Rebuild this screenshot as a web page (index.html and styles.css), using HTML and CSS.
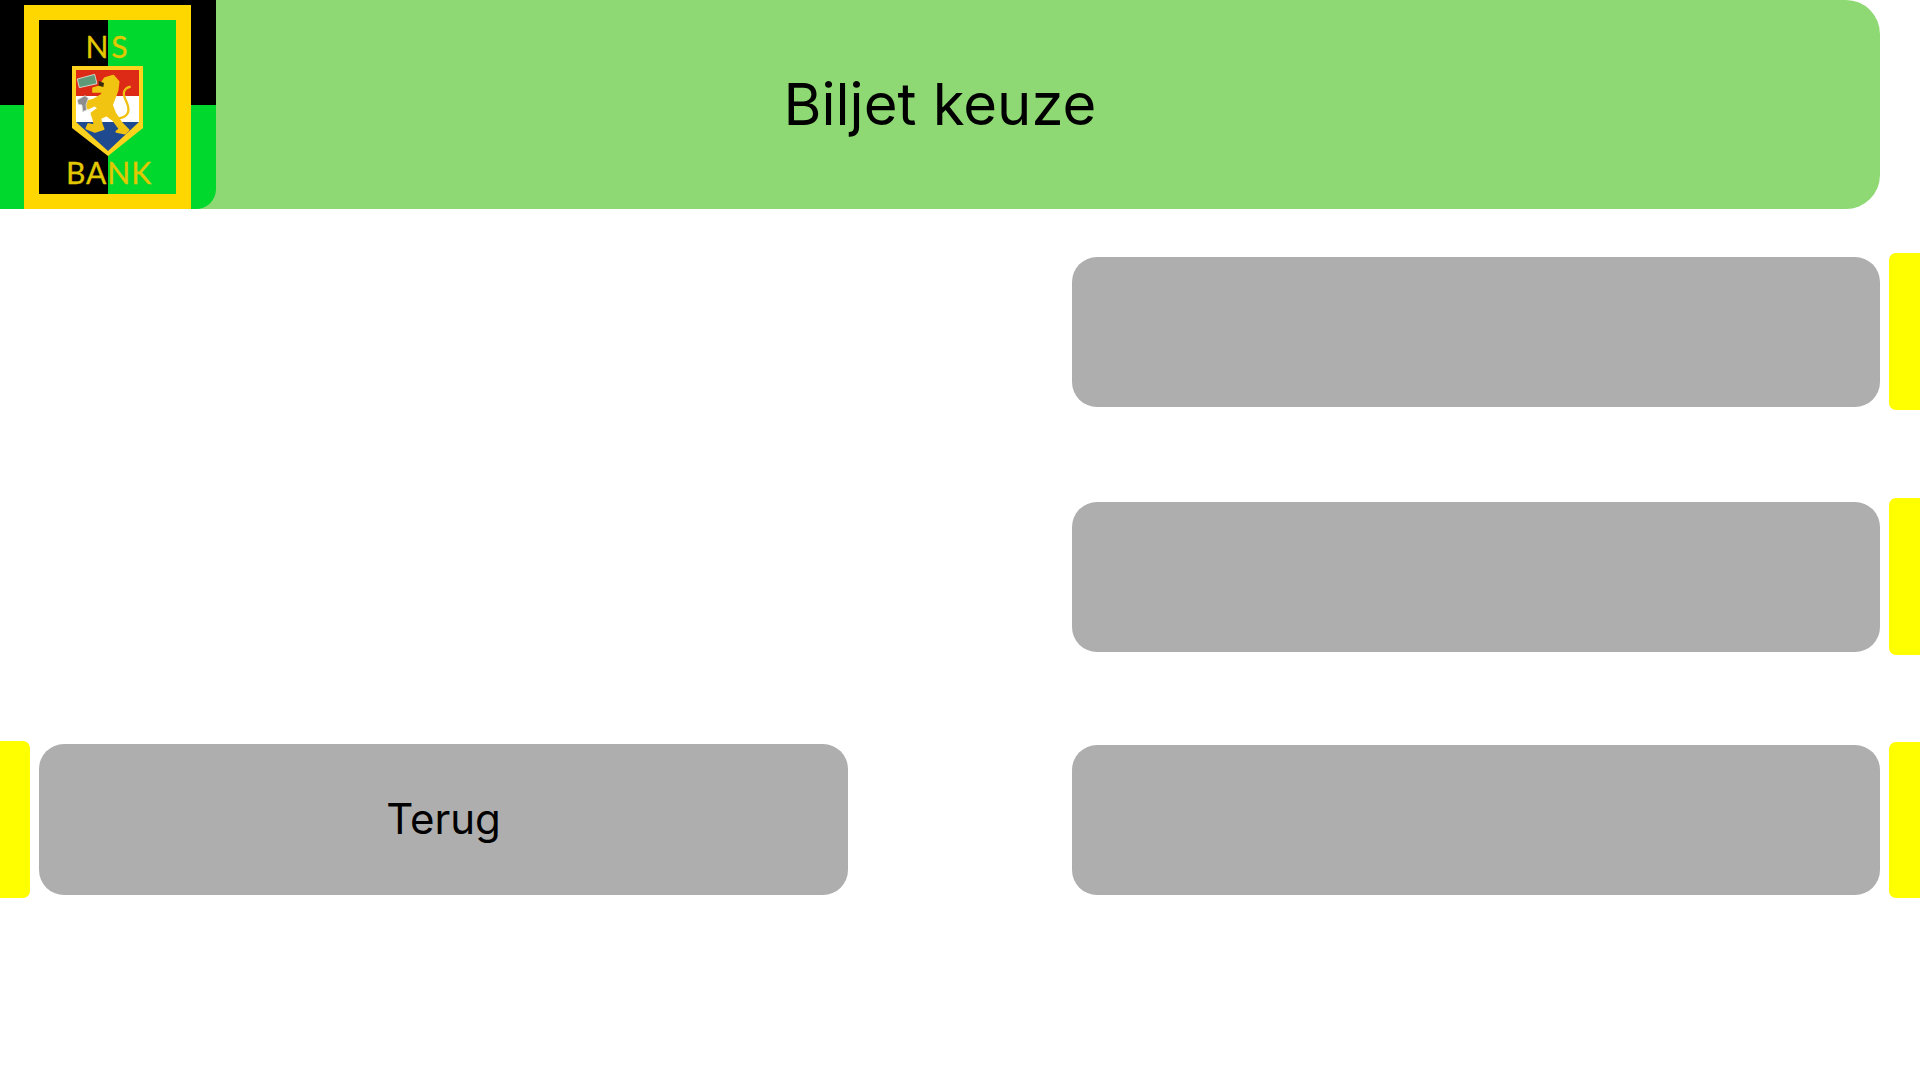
FILE: index.html
```html
<!DOCTYPE html>
<html lang="nl">
<head>
<meta charset="utf-8">
<title>Biljet keuze</title>
<link rel="stylesheet" href="styles.css">
</head>
<body>
<header class="header">
  <div class="logo">
    <svg class="logo-svg" viewBox="0 0 216 209" width="216" height="209" aria-label="NS Bank">
      <rect x="0" y="0" width="216" height="105" fill="#000"/>
      <rect x="0" y="105" width="216" height="104" fill="#00d82e"/>
      <rect x="24" y="5" width="167" height="204" fill="#ffd700"/>
      <rect x="39" y="20" width="69" height="174" fill="#000"/>
      <rect x="108" y="20" width="68" height="174" fill="#00d82e"/>
      <text class="logo-text logo-ns" x="108" y="58" text-anchor="middle">NS</text>
      <text class="logo-text" x="109" y="184" text-anchor="middle">BANK</text>
      <polygon points="72,66 143,66 143,128 108,156 72,128" fill="#ffd21e"/>
      <rect x="76" y="70" width="63" height="26" fill="#dc2a16"/>
      <rect x="76" y="96" width="63" height="26" fill="#fff"/>
      <polygon points="76,122 139,122 108,151" fill="#1f4a90"/>
      <g transform="translate(60 55) scale(0.3333)">
        <path d="M175 190 C208 185 212 165 197 135 C187 115 190 100 212 95" fill="none" stroke="#f0c010" stroke-width="7"/>
        <path d="M135 70 L160 63 L175 80 L172 105 L165 125 L155 150 L165 175 L185 205 L205 225 L195 235 L170 230 L180 222 L160 195 L140 180 L120 190 L125 210 L130 222 L105 230 L80 220 L85 208 L105 212 L100 190 L95 175 L115 160 L105 150 L85 160 L70 150 L80 140 L100 135 L125 120 L130 110 L100 110 L100 100 L120 95 L125 85 Z" fill="#f2c412" stroke="#f2c412" stroke-width="7" stroke-linejoin="round"/>
        <path d="M116 78 L132 84 L130 96 L116 92 Z" fill="#3a2a10"/>
        <polygon points="52,72 104,58 111,86 58,98" fill="#5f9a78" stroke="#dfe8df" stroke-width="2.500"/>
        <path d="M52 135 L75 122 L85 130 L78 150 L80 165 L68 170 L66 150 L55 148 Z" fill="#8d8d8d" stroke="#dcdcdc" stroke-width="2.500"/>
      </g>
    </svg>
  </div>
  <h1 class="title">Biljet keuze</h1>
</header>
<main class="main">
  <section class="col col-left">
    <div class="row row-left">
      <span class="tab"></span>
      <button class="btn">Terug</button>
    </div>
  </section>
  <section class="col col-right">
    <div class="row"><button class="btn"></button><span class="tab"></span></div>
    <div class="row"><button class="btn"></button><span class="tab"></span></div>
    <div class="row row-last"><button class="btn"></button><span class="tab"></span></div>
  </section>
</main>
</body>
</html>
```
FILE: styles.css
```css
* { box-sizing: border-box; }
html, body { margin: 0; padding: 0; background: #fff; overflow: hidden; }
body { width: 1920px; height: 1080px; font-family: "Inter", "Liberation Sans", sans-serif; color: #000; }

.header {
  width: 1880px;
  height: 209px;
  background: #8ed973;
  border-radius: 0 34px 34px 0;
  display: grid;
  grid-template-columns: 216px 1fr 216px;
  align-items: center;
}
.logo { height: 209px; border-radius: 0 0 20px 0; overflow: hidden; }
.logo-svg { display: block; }
.logo-text { font-family: "Lato", sans-serif; font-size: 30px; fill: #e2c800; stroke: #e2c800; stroke-width: 0.3px; letter-spacing: 1px; }
.logo-ns { letter-spacing: 3px; }
.title { margin: 0; padding-bottom: 2px; font-size: 58px; font-weight: 400; text-align: center; line-height: 1; }

.main {
  width: 1920px;
  display: grid;
  grid-template-columns: 1072px 848px;
}
.col { display: flex; flex-direction: column; }
.col-left { justify-content: flex-end; }
.col-right { padding-top: 44px; gap: 88px; }
.row { height: 157px; flex: none; display: flex; align-items: center; gap: 9px; }
.row-last { height: 156px; margin-top: -1px; }
.tab { width: 31px; height: 100%; background: #ffff00; flex: none; }
.row-left .tab { width: 30px; border-radius: 0 7px 7px 0; }
.col-right .tab { border-radius: 7px 0 0 7px; }
.btn {
  width: 808px;
  height: 150px;
  background: #aeaeae;
  border: 0;
  border-radius: 25px;
  padding: 0 0 2px;
  font-family: "Inter", sans-serif;
  font-size: 42px;
  color: #000;
}
.row-left .btn { width: 809px; height: 151px; }
```
